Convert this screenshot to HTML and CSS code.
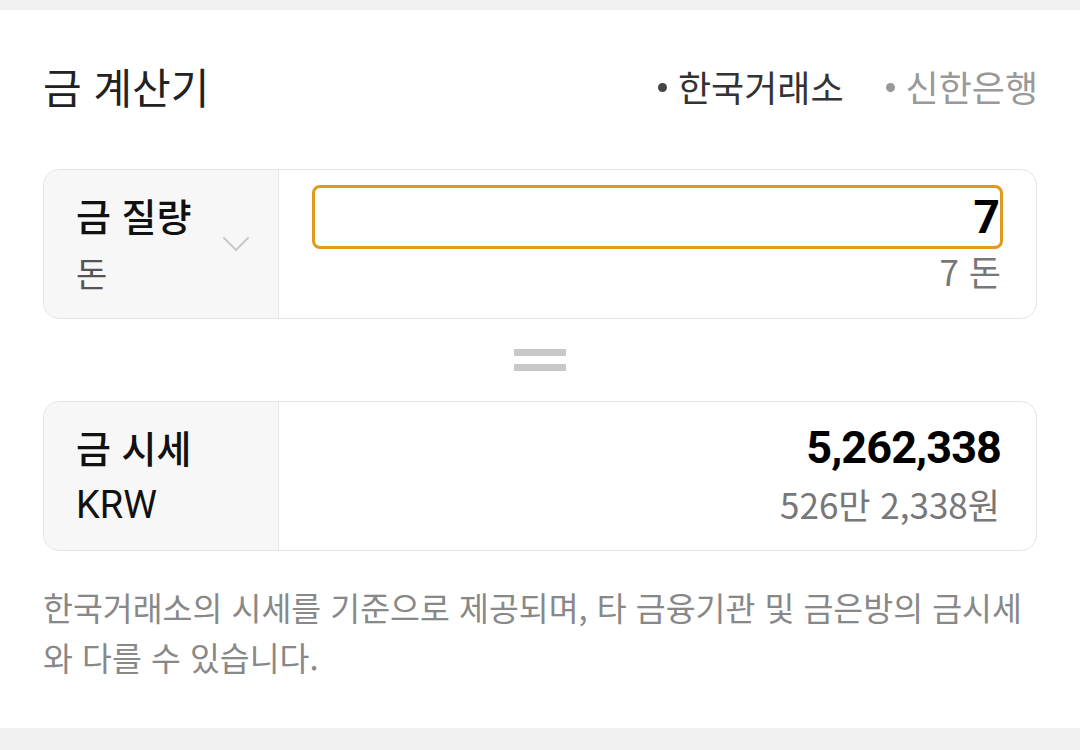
FILE: index.html
```html
<!DOCTYPE html>
<html lang="ko">
<head>
<meta charset="utf-8">
<link rel="stylesheet" href="styles.css">
</head>
<body>
<main class="panel">
  <header class="head">
    <h1 class="title">금 계산기</h1>
    <div class="sources">
      <span class="source active"><i class="dot"></i>한국거래소</span>
      <span class="source"><i class="dot"></i>신한은행</span>
    </div>
  </header>

  <section class="card">
    <div class="card-left">
      <div class="labels">
        <div class="label">금 질량</div>
        <div class="unit">돈</div>
      </div>
      <svg class="chev" width="28" height="16" viewBox="0 0 28 16"><path d="M1.5 1.5 L14 14 L26.5 1.5" fill="none" stroke="#c9c9c9" stroke-width="2"/></svg>
    </div>
    <div class="card-right">
      <div class="input">7</div>
      <div class="sub">7 돈</div>
    </div>
  </section>

  <div class="equals"><span></span><span></span></div>

  <section class="card">
    <div class="card-left">
      <div class="labels">
        <div class="label">금 시세</div>
        <div class="unit dark">KRW</div>
      </div>
    </div>
    <div class="card-right result">
      <div class="value">5,262,338</div>
      <div class="sub">526만 2,338원</div>
    </div>
  </section>

  <p class="note">한국거래소의 시세를 기준으로 제공되며, 타 금융기관 및 금은방의 금시세와 다를 수 있습니다.</p>
</main>
</body>
</html>
```

FILE: styles.css
```css
html, body {
  margin: 0;
  padding: 0;
}
body {
  background: #f0f0f0;
  font-family: "Noto Sans CJK KR", "Noto Sans", sans-serif;
  color: #222;
  padding: 10px 0 22px;
}
.panel {
  background: #fff;
  height: 718px;
  box-sizing: border-box;
  padding: 0 43px;
}
.head {
  display: flex;
  align-items: center;
  justify-content: space-between;
  height: 159px;
}
.title {
  margin: 0;
  font-size: 42px;
  line-height: 1.2;
  font-weight: 400;
  color: #222;
  margin-top: -6px;
}
.sources {
  display: flex;
  gap: 42px;
  margin-top: -6px;
  margin-right: -1px;
}
.source {
  font-size: 36px;
  line-height: 1.2;
  color: #999;
  display: flex;
  align-items: center;
}
.source.active {
  color: #333;
}
.dot {
  width: 9px;
  height: 9px;
  border-radius: 50%;
  margin-right: 11px;
  margin-top: 2px;
}
.source.active .dot { background: #444; }
.source .dot { background: #999; }

.card {
  display: flex;
  height: 150px;
  box-sizing: border-box;
  border: 1px solid #e2e2e2;
  border-radius: 16px;
  overflow: hidden;
}
.card-left {
  width: 235px;
  flex: none;
  box-sizing: border-box;
  background: #f7f7f7;
  border-right: 1px solid #e6e6e6;
  padding-left: 32px;
  padding-right: 28px;
  display: flex;
  align-items: center;
  justify-content: space-between;
}
.labels {
  display: flex;
  flex-direction: column;
}
.label {
  font-size: 38px;
  line-height: 58px;
  color: #111;
  font-weight: 500;
  white-space: nowrap;
}
.unit {
  font-size: 34px;
  line-height: 58px;
  color: #555;
}
.unit.dark {
  color: #111;
  font-family: Roboto, "Noto Sans", sans-serif;
  font-size: 38px;
}
.chev {
  display: block;
}
.card-right {
  flex: 1;
  display: flex;
  flex-direction: column;
  align-items: stretch;
  padding: 15px 33px 0 33px;
}
.input {
  height: 64px;
  box-sizing: border-box;
  border: 3px solid #e09a1c;
  border-radius: 8px;
  text-align: right;
  font-size: 46px;
  font-weight: 700;
  line-height: 58px;
  color: #000;
  font-family: Roboto, "Noto Sans", sans-serif;
}
.sub {
  text-align: right;
  font-size: 35px;
  line-height: 44px;
  color: #777;
  padding-right: 2px;
}
.result {
  padding-top: 18px;
  padding-right: 35px;
}
.value {
  text-align: right;
  font-size: 45px;
  font-weight: 700;
  line-height: 56px;
  color: #000;
  font-family: Roboto, "Noto Sans", sans-serif;
  letter-spacing: -0.9px;
}
.result .sub {
  padding-right: 1px;
  line-height: 56px;
}
.equals {
  height: 82px;
  display: flex;
  flex-direction: column;
  align-items: center;
  justify-content: center;
  gap: 8px;
}
.equals span {
  display: block;
  width: 52px;
  height: 7px;
  background: #c8c8c8;
}
.note {
  margin: 31px 0 0;
  font-size: 32.5px;
  line-height: 50px;
  color: #888;
  word-break: break-all;
}
```
